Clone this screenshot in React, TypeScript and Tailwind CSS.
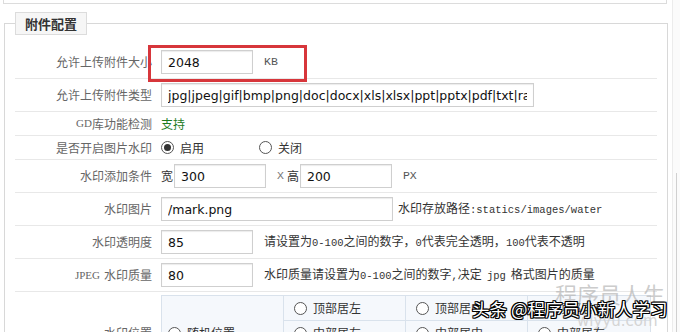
import React from "react";

const cjk = "font-['Noto_Sans_CJK_SC',sans-serif]";
const mono = "font-['Liberation_Mono',monospace] text-[10.5px]";
const unit = "font-['Liberation_Mono',monospace] text-[11.5px]";

const Radio = ({ checked = false }: { checked?: boolean }) => (
  <span className="inline-flex h-[13px] w-[13px] shrink-0 items-center justify-center rounded-full border border-[#555] bg-white">
    {checked && <span className="h-[7px] w-[7px] rounded-full bg-[#333]" />}
  </span>
);

const Field = ({ value, width }: { value: string; width: string }) => (
  <input
    readOnly
    value={value}
    className={`${width} h-[24px] border border-[#cfcfcf] bg-white px-[6px] font-['DejaVu_Sans',sans-serif] text-[12.5px] text-[#111] shadow-[inset_0_1px_1px_rgba(0,0,0,0.08)] outline-none`}
  />
);

interface RowProps {
  label: React.ReactNode;
  tall?: boolean;
  children: React.ReactNode;
}

const Row = ({ label, tall = true, children }: RowProps) => (
  <div className="flex border-b border-[#e8e8e8]">
    <div
      className={`flex w-[140px] shrink-0 items-center justify-end pr-[3px] text-[#666] ${tall ? "h-[32px]" : "h-[23px]"}`}
    >
      {label}
    </div>
    <div className="flex items-center pl-[6px]">{children}</div>
  </div>
);

const positions = [
  ["顶部居左", "顶部居中", "顶部居右"],
  ["中部居左", "中部居中", "中部居右"],
  ["底部居左", "底部居中", "底部居右"],
];

export default function App() {
  return (
    <div className={`relative flex h-[332px] w-[680px] overflow-hidden bg-white text-[12px] ${cjk}`}>
      <div className="w-[672px]">
        {/* 上一块的底边 */}
        <div className="ml-[3px] h-[4px] w-[664px] border-x border-b border-[#dcdcdc]" />

        <fieldset className="ml-[4px] mt-[8px] w-[664px] border border-[#d8d8d8] px-[10px]">
          <legend className="h-[23px] border border-[#dcdcdc] bg-[#f6f6f6] px-[9px] text-[13px] font-bold leading-[21px] text-[#333]">
            附件配置
          </legend>

          <div className="pt-[11px]">
            <Row label="允许上传附件大小">
              <Field value="2048" width="w-[92px]" />
              <span className={`ml-[11px] text-[#555] ${unit}`}>KB</span>
            </Row>

            <Row label="允许上传附件类型">
              <Field
                value="jpg|jpeg|gif|bmp|png|doc|docx|xls|xlsx|ppt|pptx|pdf|txt|rar|zip|swf"
                width="w-[373px]"
              />
            </Row>

            <Row
              tall={false}
              label={
                <>
                  <span className="font-['Liberation_Serif',serif] text-[11px]">GD</span>库功能检测
                </>
              }
            >
              <span className="text-[#1d7a1d]">支持</span>
            </Row>

            <Row tall={false} label="是否开启图片水印">
              <label className="flex items-center gap-[6px] text-[#333]">
                <Radio checked />
                启用
              </label>
              <label className="ml-[55px] flex items-center gap-[6px] text-[#333]">
                <Radio />
                关闭
              </label>
            </Row>

            <Row label="水印添加条件">
              <span className="pr-[1px] text-[#333]">宽</span>
              <Field value="300" width="w-[92px]" />
              <span className={`ml-[11px] text-[#777] ${unit}`}>X</span>
              <span className="ml-[3px] pr-[1px] text-[#333]">高</span>
              <Field value="200" width="w-[92px]" />
              <span className={`ml-[11px] text-[#555] ${unit}`}>PX</span>
            </Row>

            <Row label="水印图片">
              <Field value="/mark.png" width="w-[232px]" />
              <span className="ml-[5px] whitespace-nowrap text-[#333]">
                水印存放路径<span className={mono}>:statics/images/water</span>
              </span>
            </Row>

            <Row label="水印透明度">
              <Field value="85" width="w-[92px]" />
              <span className="ml-[11px] whitespace-nowrap text-[#333]">
                请设置为<span className={mono}>0-100</span>之间的数字，<span className={mono}>0</span>代表完全透明，
                <span className={mono}>100</span>代表不透明
              </span>
            </Row>

            <Row
              label={
                <>
                  <span className="mr-[4px] font-['Liberation_Serif',serif] text-[11px]">JPEG</span>水印质量
                </>
              }
            >
              <Field value="80" width="w-[92px]" />
              <span className="ml-[11px] whitespace-nowrap text-[#333]">
                水印质量请设置为<span className={mono}>0-100</span>之间的数字<span className={mono}>,</span>决定
                <span className={`mx-[5px] ${mono}`}>jpg</span>格式图片的质量
              </span>
            </Row>

            <div className="flex pt-[3px]">
              <div className="flex w-[140px] shrink-0 items-center justify-end pr-[3px] text-[#666]">水印位置</div>
              <div className="pl-[6px]">
                <div className="flex border border-[#d9e2ec] bg-[#f5f8fc] text-[#333]">
                  <div className="flex w-[122px] items-center gap-[6px] border-r border-[#d9e2ec] pl-[6px]">
                    <Radio />
                    随机位置
                  </div>
                  <div className="flex flex-col">
                    {positions.map((row, i) => (
                      <div key={i} className="flex border-b border-[#d9e2ec] last:border-b-0">
                        {row.map((p) => (
                          <div
                            key={p}
                            className="flex h-[24px] w-[122px] items-center gap-[6px] border-r border-[#d9e2ec] pl-[10px] last:border-r-0"
                          >
                            <Radio />
                            {p}
                          </div>
                        ))}
                      </div>
                    ))}
                  </div>
                </div>
              </div>
            </div>
          </div>
        </fieldset>
      </div>

      {/* 滚动条 */}
      <div className="w-[8px] border-l border-[#ececec] bg-[#fbfbfb]">
        <div className="ml-[3px] mt-[173px] h-[160px] border-l border-[#d0d0d0]" />
      </div>

      {/* 红色标注框 */}
      <div className="absolute left-[148px] top-[45px] h-[37px] w-[159px] border-[3px] border-[#d7363b]" />

      {/* 水印 */}
      <div className="absolute left-[555px] top-[282px] text-[22px] leading-none text-[#b5b5b5]/70">程序员人生</div>
      <div className="absolute left-[577px] top-[314px] font-['DejaVu_Sans',sans-serif] text-[15px] leading-none text-[#d4d4d4]">
        wlyyu.com
      </div>
      <div className="absolute left-[472px] top-[300px] whitespace-nowrap text-[17.5px] leading-none text-white [text-shadow:-1px_-1px_0_#000,1px_-1px_0_#000,-1px_1px_0_#000,1px_1px_0_#000,0_1px_0_#000,0_-1px_0_#000,1px_0_0_#000,-1px_0_0_#000]">
        头条 @程序员小新人学习
      </div>
    </div>
  );
}
